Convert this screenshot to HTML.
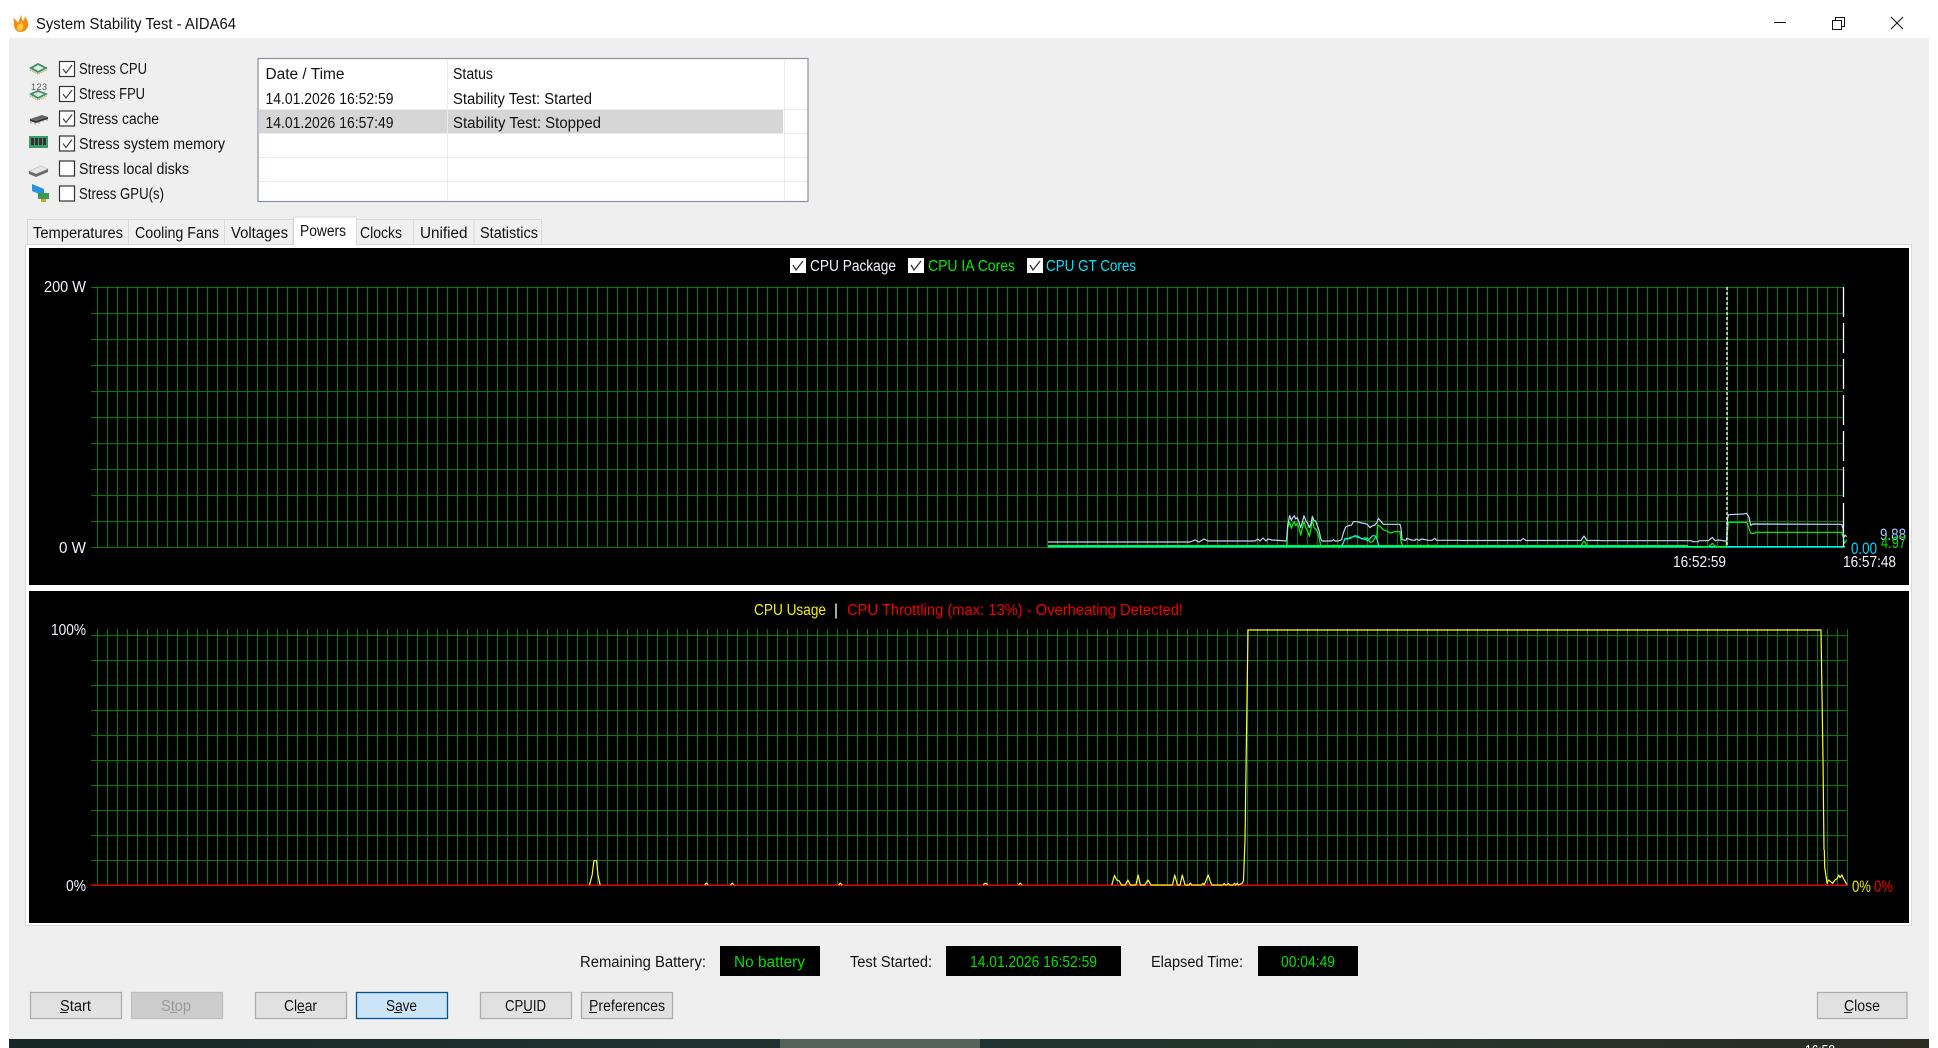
<!DOCTYPE html>
<html>
<head>
<meta charset="utf-8">
<title>System Stability Test - AIDA64</title>
<style>
html,body{margin:0;padding:0;background:#fff;width:1938px;height:1048px;overflow:hidden}
svg{display:block}
text{font-family:"Liberation Sans",sans-serif;font-size:15.5px;fill:#111;white-space:pre}
.w{fill:#f4f6ff}
.g{fill:#00e000}
polyline{fill:none;vector-effect:non-scaling-stroke;stroke-linejoin:round}
</style>
</head>
<body>
<svg width="1938" height="1048" viewBox="0 0 1938 1048" xmlns="http://www.w3.org/2000/svg">
<defs>
<pattern id="v" x="97" y="0" width="10" height="1100" patternUnits="userSpaceOnUse"><rect width="1.1" height="1100" fill="#0a760a"/></pattern>
<pattern id="h1" x="0" y="287" width="2000" height="26" patternUnits="userSpaceOnUse"><rect width="2000" height="1.1" fill="#0a760a"/></pattern>
<pattern id="h2" x="0" y="635" width="2000" height="25" patternUnits="userSpaceOnUse"><rect width="2000" height="1.1" fill="#0a760a"/></pattern>
<linearGradient id="task" x1="0" x2="1" y1="0" y2="0"><stop offset="0" stop-color="#172726"/><stop offset=".35" stop-color="#1f3130"/><stop offset=".7" stop-color="#24362c"/><stop offset="1" stop-color="#2b2b22"/></linearGradient>
</defs>

<!-- window -->
<rect width="1938" height="1048" fill="#fff"/>
<rect x="9" y="38" width="1920" height="1001" fill="#efefef"/>
<rect x="9" y="1039" width="1920" height="9" fill="url(#task)"/>
<rect x="780" y="1039" width="200" height="9" fill="#54625c"/>
<text x="1805" y="1056" style="fill:#fff" textLength="30" lengthAdjust="spacingAndGlyphs">16:58</text>

<!-- title bar -->
<path d="M21 13c0 4 1 6 2 8 1-1 2-3 2-5 2 4 4 7 3 10-1 4-4 6-8 6-3 0-6-3-6-7 0-2 0-5-1-7 2 1 4 3 5 5 1-3 3-6 3-10z" fill="#f58a14"/>
<path d="M21 21c2 3 3 5 2 7-1 2-2 3-3 3-2 0-3-2-3-4 0-1 1-2 2-3 1 0 2-1 2-3z" fill="#ffc93a"/>
<text x="36" y="29" textLength="200" lengthAdjust="spacingAndGlyphs">System Stability Test - AIDA64</text>
<rect x="1774" y="22" width="12" height="1" fill="#111"/>
<path d="M1832.5 20.5h9v9h-9zM1835.5 20.5v-3h9v9h-3" fill="none" stroke="#111" stroke-width="1"/>
<path d="M1891 17l12 12M1903 17l-12 12" fill="none" stroke="#111" stroke-width="1"/>

<!-- stress icons -->
<g>
<path d="M29 68l9-5 10 5-10 5z" fill="#3a8f68"/><path d="M33 68l5-3 6 3-6 3z" fill="#e2ebe2"/><path d="M30 70l8 4 9-4" fill="none" stroke="#b8962e" stroke-width="1.2" stroke-dasharray="1 1"/>
<text x="31" y="90" style="font-size:9px;fill:#555" textLength="16">123</text>
<path d="M29 94l9-4 10 4-10 5z" fill="#3a8f68"/><path d="M33 94l5-2 6 2-6 3z" fill="#e2ebe2"/><path d="M30 96l8 4 9-4" fill="none" stroke="#b8962e" stroke-width="1.2" stroke-dasharray="1 1"/>
<path d="M30 119l12-4 6 2-12 4z" fill="#666"/><path d="M30 119l0 2 6 2 12-4 0-2-12 4z" fill="#333"/><path d="M31 122v2M35 123v2M39 122v2M43 120v2M47 119v2" stroke="#999" stroke-width="1"/>
<rect x="29" y="136" width="19" height="12" fill="#3a9a68"/><rect x="31" y="138" width="3" height="7" fill="#333"/><rect x="35" y="138" width="3" height="7" fill="#333"/><rect x="39" y="138" width="3" height="7" fill="#333"/><rect x="43" y="138" width="3" height="7" fill="#333"/>
<path d="M29 171l12-5 7 3-12 5z" fill="#e6e6e6" stroke="#bbb" stroke-width=".6"/><path d="M29 171l7 3 12-5v3l-12 5-7-3z" fill="#6a6a6a"/>
<path d="M32 184l12 5v7l-12-5z" fill="#2b8fe0"/><rect x="38" y="193" width="11" height="6" fill="#3a9a50"/><rect x="41" y="199" width="5" height="3" fill="#d8a030"/>
</g>

<!-- checkboxes -->
<g fill="#fff" stroke="#333" stroke-width="1.2">
<rect x="59.5" y="61.5" width="15" height="15"/><rect x="59.5" y="86.5" width="15" height="15"/><rect x="59.5" y="111" width="15" height="15"/><rect x="59.5" y="136" width="15" height="15"/><rect x="59.5" y="161" width="15" height="15"/><rect x="59.5" y="186" width="15" height="15"/>
</g>
<g fill="none" stroke="#444" stroke-width="1.2">
<path d="M63 69l3 4 6-8"/><path d="M63 94l3 4 6-8"/><path d="M63 118.500l3 4 6-8"/><path d="M63 143.500l3 4 6-8"/>
</g>
<text x="79" y="74" textLength="68" lengthAdjust="spacingAndGlyphs">Stress CPU</text>
<text x="79" y="99" textLength="66" lengthAdjust="spacingAndGlyphs">Stress FPU</text>
<text x="79" y="124" textLength="80" lengthAdjust="spacingAndGlyphs">Stress cache</text>
<text x="79" y="149" textLength="146" lengthAdjust="spacingAndGlyphs">Stress system memory</text>
<text x="79" y="174" textLength="110" lengthAdjust="spacingAndGlyphs">Stress local disks</text>
<text x="79" y="199" textLength="85" lengthAdjust="spacingAndGlyphs">Stress GPU(s)</text>

<!-- list -->
<rect x="258" y="58.500" width="550" height="143" fill="#fff" stroke="#8a92a0" stroke-width="1.2"/>
<rect x="259" y="110" width="524" height="23" fill="#d6d6d6"/>
<g fill="#ececec">
<rect x="447" y="59" width="1" height="142"/><rect x="784" y="59" width="1" height="142"/>
<rect x="259" y="109" width="548" height="1"/><rect x="259" y="133" width="548" height="1"/><rect x="259" y="157" width="548" height="1"/><rect x="259" y="181" width="548" height="1"/>
</g>
<text x="265.500" y="79" textLength="79" lengthAdjust="spacingAndGlyphs">Date / Time</text>
<text x="453" y="79" textLength="40" lengthAdjust="spacingAndGlyphs">Status</text>
<text x="265.500" y="104" textLength="128" lengthAdjust="spacingAndGlyphs">14.01.2026 16:52:59</text>
<text x="453" y="104" textLength="139" lengthAdjust="spacingAndGlyphs">Stability Test: Started</text>
<text x="265.500" y="128" textLength="128" lengthAdjust="spacingAndGlyphs">14.01.2026 16:57:49</text>
<text x="453" y="128" textLength="148" lengthAdjust="spacingAndGlyphs">Stability Test: Stopped</text>

<!-- tabs -->
<g fill="#f0f0f0" stroke="#d9d9d9" stroke-width="1">
<rect x="27.500" y="219.500" width="101" height="25"/>
<rect x="128.500" y="219.500" width="96" height="25"/>
<rect x="224.500" y="219.500" width="68.500" height="25"/>
<rect x="356" y="219.500" width="57.500" height="25"/>
<rect x="413.500" y="219.500" width="60.500" height="25"/>
<rect x="474" y="219.500" width="67.500" height="25"/>
</g>
<rect x="25.500" y="244.500" width="1886" height="681" fill="#fff" stroke="#d9d9d9"/>
<path d="M293.500 245v-28h63v28" fill="#fff" stroke="#d9d9d9"/>
<text x="33" y="238" textLength="90" lengthAdjust="spacingAndGlyphs">Temperatures</text>
<text x="135" y="238" textLength="84" lengthAdjust="spacingAndGlyphs">Cooling Fans</text>
<text x="231" y="238" textLength="57" lengthAdjust="spacingAndGlyphs">Voltages</text>
<text x="300" y="236" textLength="46" lengthAdjust="spacingAndGlyphs">Powers</text>
<text x="360" y="238" textLength="42" lengthAdjust="spacingAndGlyphs">Clocks</text>
<text x="420" y="238" textLength="47.500" lengthAdjust="spacingAndGlyphs">Unified</text>
<text x="480" y="238" textLength="58" lengthAdjust="spacingAndGlyphs">Statistics</text>

<!-- chart 1 -->
<rect x="29" y="248" width="1880" height="337" fill="#000"/>
<rect x="97" y="286" width="1741" height="261" fill="url(#v)"/>
<rect x="91" y="287" width="1752" height="261" fill="url(#h1)"/>
<text class="w" x="44" y="292" textLength="42" lengthAdjust="spacingAndGlyphs">200 W</text>
<text class="w" x="59" y="553" textLength="27" lengthAdjust="spacingAndGlyphs">0 W</text>

<g fill="#fff"><rect x="790" y="258" width="16" height="15"/><rect x="908" y="258" width="16" height="15"/><rect x="1027" y="258" width="16" height="15"/></g>
<g fill="none" stroke="#333" stroke-width="1.3"><path d="M793 265l3 5 7-9"/><path d="M911 265l3 5 7-9"/><path d="M1030 265l3 5 7-9"/></g>
<text class="w" x="810" y="271" textLength="86" lengthAdjust="spacingAndGlyphs">CPU Package</text>
<text x="928" y="271" textLength="87" lengthAdjust="spacingAndGlyphs" style="fill:#00ee00">CPU IA Cores</text>
<text x="1046" y="271" textLength="90" lengthAdjust="spacingAndGlyphs" style="fill:#00e5ff">CPU GT Cores</text>

<!-- cyan baseline and green baseline -->
<rect x="1048" y="546" width="797" height="1.500" fill="#00f0ff"/>
<rect x="1048" y="545" width="640" height="1.500" fill="#00ff00"/>

<!-- chart 1 traces -->
<polyline stroke="#c4d2ff" stroke-width="1.2" points="1048,542 1190,542 1195,540 1199,542 1204,539 1208,541 1255,541 1258,539 1260,541 1263,538 1266,541 1268,539 1272,540 1287,541"/>
<g transform="translate(1280,505) scale(.33333)">
<polyline stroke="#00ff00" stroke-width="1.2" points="20,124 23,68 29,52 34,70 38,60 43,50 47,62 52,55 57,70 62,90 68,65 72,50 78,70 83,78 88,94 93,70 97,42 102,68 107,72 112,80 118,100 122,124 155,124 162,120 170,126 180,126 190,115 195,100 205,100 215,96 225,94 235,98 245,100 255,104 262,98 270,112 278,110 285,98 290,100 293,60 300,64 310,74 320,78 330,84 345,80 360,80 363,110 368,122 385,124 415,124 420,120 425,124 440,124 445,120 450,124 462,124 466,120 470,124"/>
<polyline stroke="#00eaff" stroke-width="1.2" points="175,127 185,124 195,102 205,102 215,98 225,92 235,94 245,102 255,98 262,108 270,100 278,92 285,92 290,100 298,127"/>
<polyline stroke="#c4d2ff" stroke-width="1.2" points="20,106 23,62 29,32 34,46 38,38 43,32 47,42 52,38 57,52 62,68 68,48 72,32 78,48 83,54 88,68 93,56 97,34 102,46 107,48 112,62 117,76 122,100 126,108 155,108 160,104 165,108 175,108 185,104 190,84 197,66 205,62 215,60 220,50 232,50 245,54 255,56 262,58 270,68 278,62 285,60 291,52 295,40 302,48 310,58 360,58 363,70 366,104 378,106 380,100 395,105 405,106 408,102 418,106 425,102 445,106 455,106 465,100 470,106 540,106"/>
</g>
<polyline stroke="#c4d2ff" stroke-width="1.2" points="1460,540.500 1521,540.500 1523,538.500 1526,540.500 1581,540.500 1584,536 1587,540.500 1600,540.500"/>
<polyline stroke="#00ff00" stroke-width="1.2" points="1581,545.500 1584,541 1587,545.500"/>
<g transform="translate(1600,500) scale(.33333)">
<polyline stroke="#00ff00" stroke-width="1.2" points="275,141 297,142 325,140 337,130 345,138 360,141 378,141 382,100 385,67 440,67 447,85 452,100 465,100 466,97 725,97 729,110 733,130 740,120"/>
<polyline stroke="#c4d2ff" stroke-width="1.2" points="0,122 275,122 277,125 295,125 297,122 325,122 330,118 337,112 345,122 355,120 375,123 380,123 382,62 385,44 430,42 440,40 447,52 452,76 458,72 725,73 729,85 731,115 735,105 740,110"/>
</g>
<path d="M1727 287v260" stroke="#fff" stroke-width="1.300" stroke-dasharray="3 2" fill="none"/>
<path d="M1843.500 287v260" stroke="#fff" stroke-width="1.300" stroke-dasharray="30 6" fill="none"/>

<text x="1880" y="540" textLength="26" lengthAdjust="spacingAndGlyphs" style="fill:#9fc6ff;font-size:17px">9.88</text>
<text x="1881" y="548" textLength="25" lengthAdjust="spacingAndGlyphs" style="fill:#00e000;font-size:17px">4.97</text>
<text x="1851" y="554" textLength="26" lengthAdjust="spacingAndGlyphs" style="fill:#00d8ff;font-size:17px">0.00</text>
<text class="w" x="1673" y="567" textLength="53" lengthAdjust="spacingAndGlyphs">16:52:59</text>
<text class="w" x="1843" y="567" textLength="53" lengthAdjust="spacingAndGlyphs">16:57:48</text>

<!-- chart 2 -->
<rect x="29" y="591" width="1880" height="332" fill="#000"/>
<rect x="97" y="629" width="1751" height="256" fill="url(#v)"/>
<rect x="91" y="635" width="1757" height="226" fill="url(#h2)"/>
<text class="w" x="51" y="635" textLength="35" lengthAdjust="spacingAndGlyphs">100%</text>
<text class="w" x="66" y="891" textLength="20" lengthAdjust="spacingAndGlyphs">0%</text>
<text x="754" y="615" textLength="72" lengthAdjust="spacingAndGlyphs" style="fill:#f5f000">CPU Usage</text>
<text x="834" y="615" style="fill:#fff">|</text>
<text x="847" y="615" textLength="336" lengthAdjust="spacingAndGlyphs" style="fill:#f00000">CPU Throttling (max: 13%) - Overheating Detected!</text>
<rect x="91" y="884.500" width="1757" height="1.500" fill="#e00000"/>

<!-- yellow trace -->
<g transform="translate(560,840) scale(.44643,.33333)">
<polyline stroke="#ffff20" stroke-width="1.2" points="66,135 72,105 76,62 82,62 85,105 90,135"/>
<polyline stroke="#ffff20" stroke-width="1.2" points="324,135 328,129 332,135"/>
<polyline stroke="#ffff20" stroke-width="1.2" points="382,135 386,129 390,135"/>
<polyline stroke="#ffff20" stroke-width="1.2" points="624,135 628,129 632,135"/>
<polyline stroke="#ffff20" stroke-width="1.2" points="948,135 951,130 955,130 958,135"/>
<polyline stroke="#ffff20" stroke-width="1.2" points="1027,135 1031,129 1035,135"/>
<polyline stroke="#ffff20" stroke-width="1.2" points="1236,135 1242,106 1247,120 1252,122 1258,135 1266,135 1272,120 1278,135 1290,135 1295,105 1300,135 1310,135 1317,120 1324,135 1372,135 1377,105 1383,135 1389,135 1394,105 1400,135 1409,135 1412,129 1415,135 1437,135 1440,130 1443,135 1448,118 1452,105 1457,125 1460,135 1485,135 1488,130 1491,135 1494,135 1497,130 1500,135 1508,135 1511,130 1514,135 1517,130 1520,135 1528,130 1532,120"/>
</g>
<polyline stroke="#ffff20" stroke-width="1.2" points="1243.500,880 1245,840 1247,700 1248,630 1821,630 1823,760 1824,850"/>
<g transform="translate(1780,850) scale(.33333)">
<polyline stroke="#ffff20" stroke-width="1.2" points="133,0 134,50 139,85 141,100 146,90 152,95 158,100 165,90 172,85 176,75 180,83 186,75 190,85 196,95 200,103"/>
</g>
<text x="1852" y="892" textLength="19" lengthAdjust="spacingAndGlyphs" style="fill:#e8e800;font-size:17px">0%</text>
<text x="1874" y="892" textLength="19" lengthAdjust="spacingAndGlyphs" style="fill:#f00000;font-size:17px">0%</text>

<!-- info row -->
<text x="580" y="967" textLength="126" lengthAdjust="spacingAndGlyphs">Remaining Battery:</text>
<rect x="720" y="946" width="100" height="30" fill="#000"/>
<text class="g" x="734" y="967" textLength="71" lengthAdjust="spacingAndGlyphs">No battery</text>
<text x="850" y="967" textLength="82" lengthAdjust="spacingAndGlyphs">Test Started:</text>
<rect x="946" y="946" width="175" height="30" fill="#000"/>
<text class="g" x="970" y="967" textLength="127" lengthAdjust="spacingAndGlyphs">14.01.2026 16:52:59</text>
<text x="1151" y="967" textLength="92" lengthAdjust="spacingAndGlyphs">Elapsed Time:</text>
<rect x="1258" y="946" width="100" height="30" fill="#000"/>
<text class="g" x="1281" y="967" textLength="54" lengthAdjust="spacingAndGlyphs">00:04:49</text>

<!-- buttons -->
<g fill="#e1e1e1" stroke="#adadad" stroke-width="1.300">
<rect x="30.500" y="992.500" width="91" height="26"/>
<rect x="255.500" y="992.500" width="91" height="26"/>
<rect x="480.500" y="992.500" width="91" height="26"/>
<rect x="581.500" y="992.500" width="91" height="26"/>
<rect x="1817.500" y="992.500" width="89.500" height="26"/>
</g>
<rect x="131.500" y="992.500" width="91" height="26" fill="#cccccc" stroke="#bfbfbf" stroke-width="1.300"/>
<rect x="356.500" y="992.500" width="91" height="26" fill="#cce4f7" stroke="#005499" stroke-width="1.300"/>
<text x="60" y="1011" textLength="31" lengthAdjust="spacingAndGlyphs">Start</text>
<text x="161" y="1011" textLength="30" lengthAdjust="spacingAndGlyphs" style="fill:#9a9a9a">Stop</text>
<text x="284" y="1011" textLength="33" lengthAdjust="spacingAndGlyphs">Clear</text>
<text x="386" y="1011" textLength="31" lengthAdjust="spacingAndGlyphs">Save</text>
<text x="505" y="1011" textLength="41" lengthAdjust="spacingAndGlyphs">CPUID</text>
<text x="589" y="1011" textLength="76" lengthAdjust="spacingAndGlyphs">Preferences</text>
<text x="1844" y="1011" textLength="36" lengthAdjust="spacingAndGlyphs">Close</text>
<g fill="#111">
<rect x="60" y="1012" width="8" height="1"/><rect x="297" y="1012" width="8" height="1"/><rect x="394" y="1012" width="8" height="1"/><rect x="523" y="1012" width="9" height="1"/><rect x="589" y="1012" width="8" height="1"/><rect x="1844" y="1012" width="8" height="1"/>
</g>
<rect x="170" y="1012" width="7" height="1" fill="#9a9a9a"/>
</svg>
</body>
</html>
